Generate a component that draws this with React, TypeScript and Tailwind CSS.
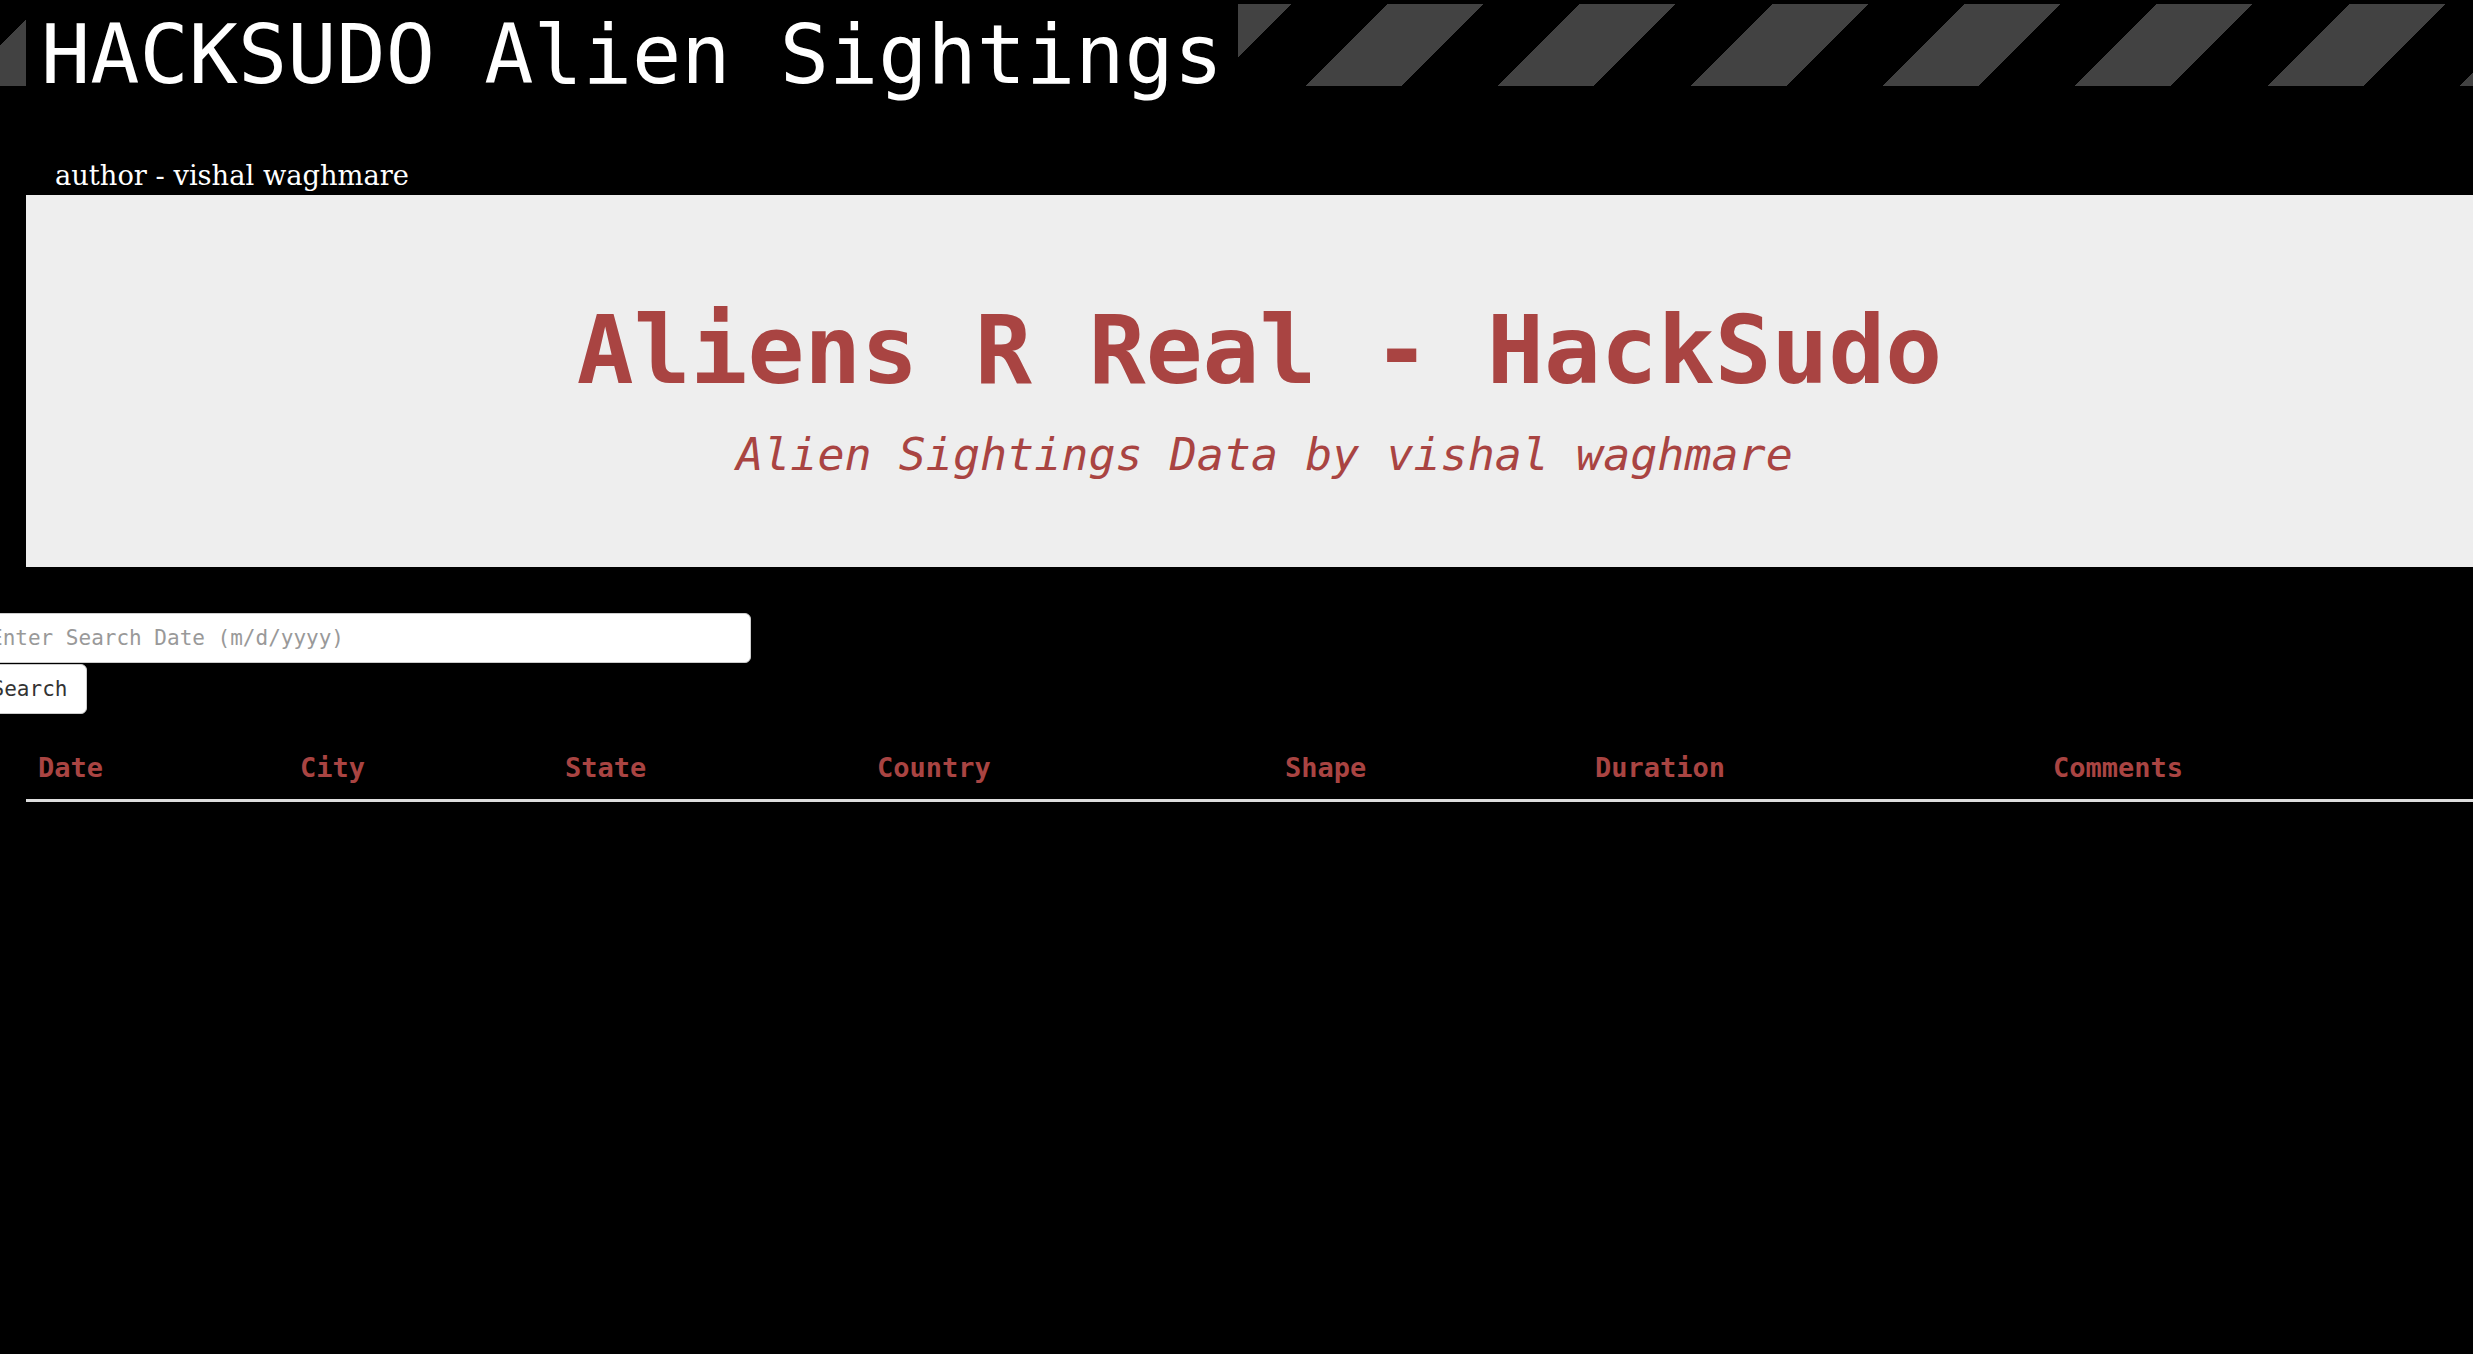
import React from "react";

const mono = "font-['DejaVu_Sans_Mono',monospace]";

export default function App() {
  const cols: { label: string; w: string }[] = [
    { label: "Date", w: "w-[262px]" },
    { label: "City", w: "w-[265px]" },
    { label: "State", w: "w-[312px]" },
    { label: "Country", w: "w-[408px]" },
    { label: "Shape", w: "w-[310px]" },
    { label: "Duration", w: "w-[458px]" },
    { label: "Comments", w: "flex-1" },
  ];
  return (
    <div className="min-h-screen w-full overflow-hidden bg-black">
      <div className="pt-[4px]">
        <div className="h-[82px] bg-[repeating-linear-gradient(135deg,#000_0px,#000_29px,#424242_29px,#424242_97px,#000_97px,#000_136px)]">
          <h1
            className={`ml-[26px] h-[82px] w-[1212px] whitespace-nowrap bg-black pl-[15px] text-[81.8px] font-normal leading-[102px] text-white ${mono}`}
          >
            HACKSUDO Alien Sightings
          </h1>
        </div>
      </div>
      <div className="h-[109px] pl-[55px] pt-[76px] font-['DejaVu_Serif',serif] text-[27.3px] leading-[27px] text-white">
        author - vishal waghmare
      </div>
      <div
        className={`ml-[26px] h-[372px] bg-[#eeeeee] pl-[20px] pt-[103px] text-center text-[#a94442] ${mono}`}
      >
        <h1 className="whitespace-nowrap text-[94.5px] font-bold leading-[104px]">
          Aliens R Real - HackSudo
        </h1>
        <p className="mt-[26px] whitespace-nowrap pl-[10px] text-[45px] italic leading-[54px]">
          Alien Sightings Data by vishal waghmare
        </p>
      </div>
      <div className="mt-[46px]">
        <input
          type="text"
          placeholder="Enter Search Date (m/d/yyyy)"
          className={`-ml-[30px] block h-[50px] w-[781px] rounded-[6px] border border-[#cccccc] bg-white pl-[19px] text-[21px] text-[#555] placeholder:text-[#999999] ${mono}`}
        />
        <button
          type="button"
          className={`-ml-[28px] mt-[1px] block h-[50px] w-[115px] rounded-[6px] border border-[#cccccc] bg-white text-center text-[21px] leading-[48px] text-[#333333] ${mono}`}
        >
          Search
        </button>
      </div>
      <div className={`ml-[26px] mt-[22px] flex border-b-[3px] border-[#dddddd] ${mono}`}>
        {cols.map((c) => (
          <div
            key={c.label}
            className={`${c.w} px-[12px] py-[12px] text-[27px] font-bold leading-[39px] text-[#a94442]`}
          >
            {c.label}
          </div>
        ))}
      </div>
    </div>
  );
}
